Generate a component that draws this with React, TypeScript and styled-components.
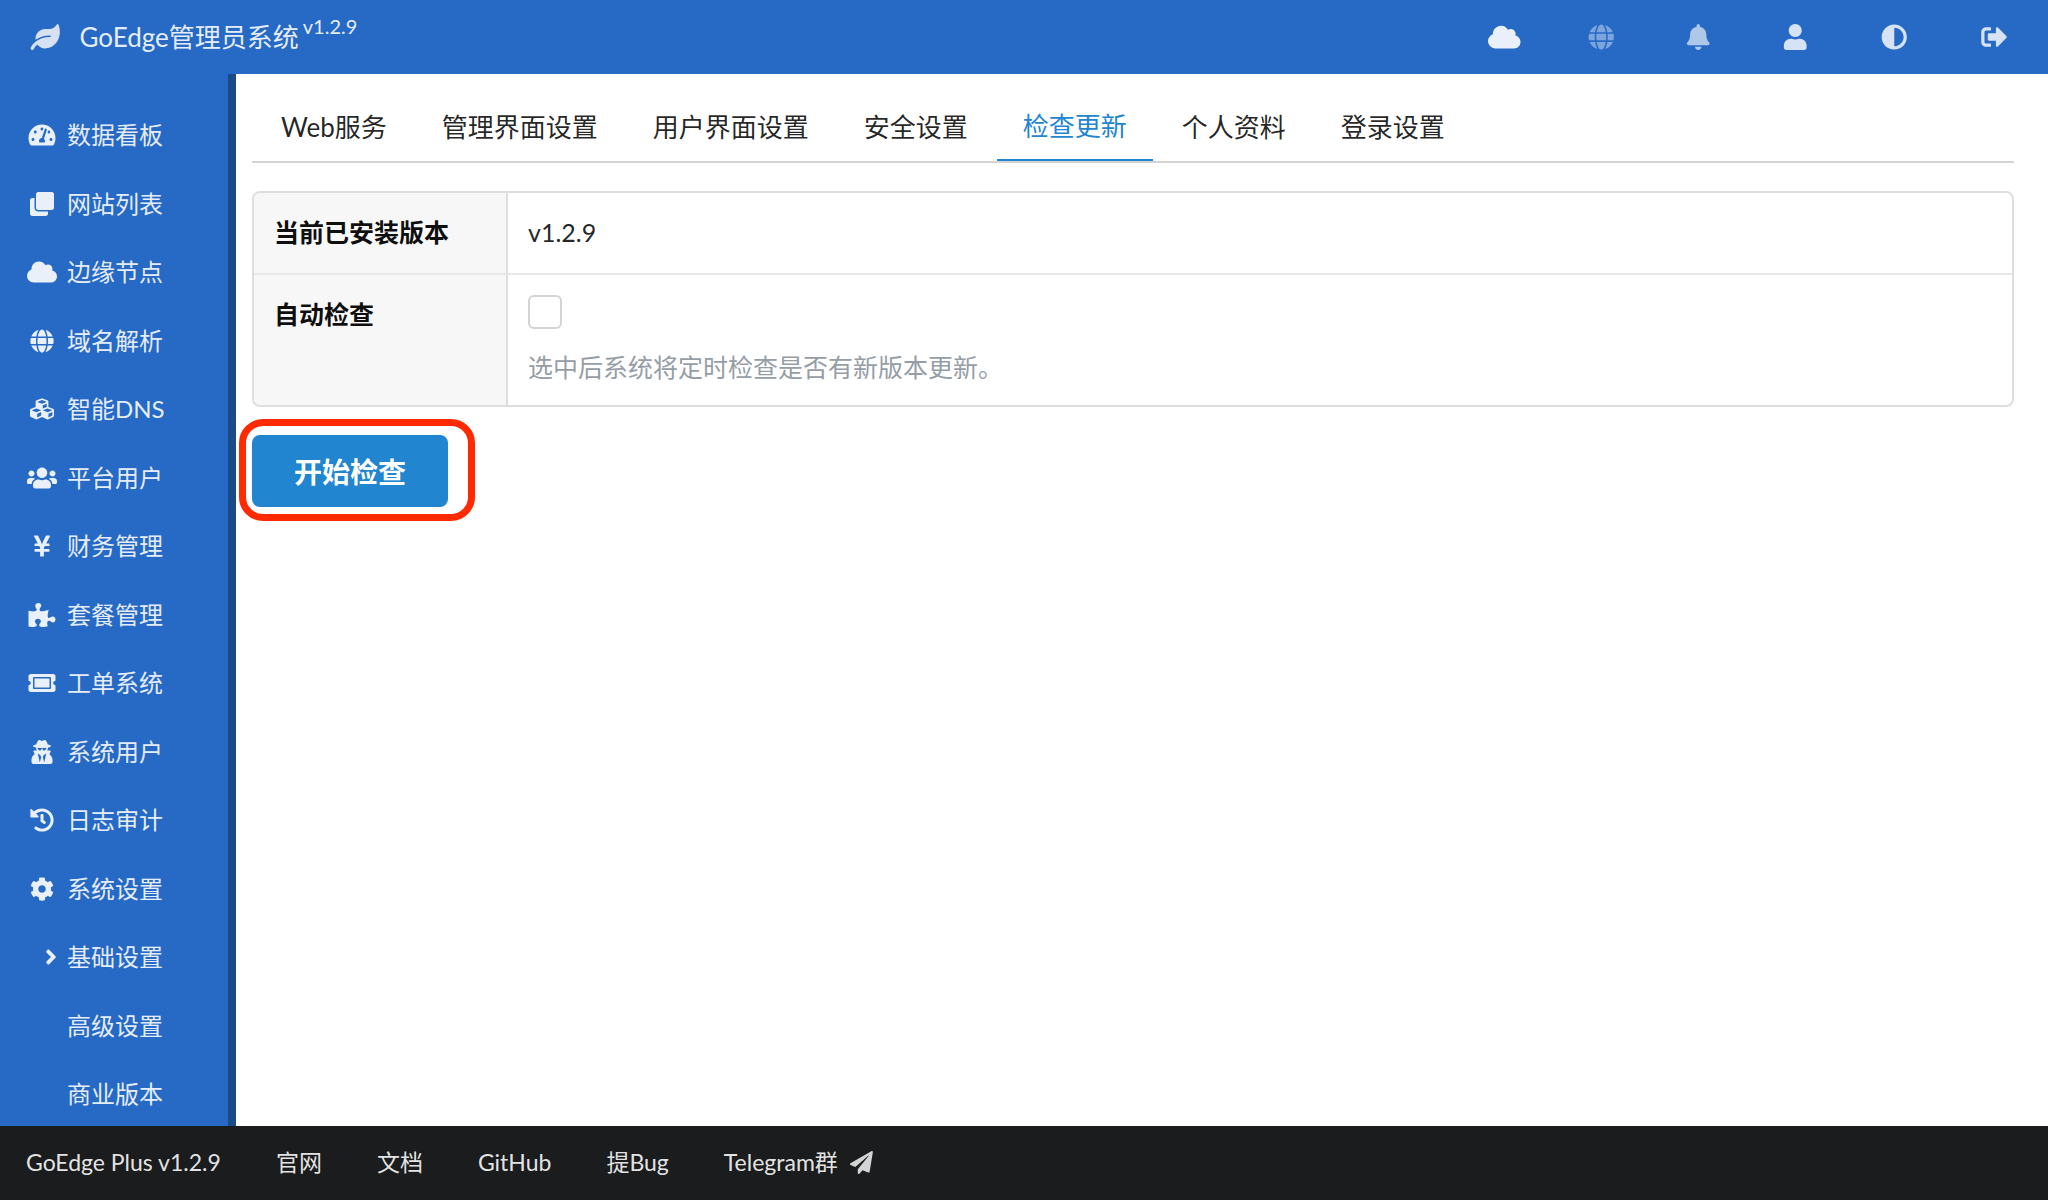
import React from "react";
import styled, { createGlobalStyle, css } from "styled-components";
import {
  FaLeaf, FaTachometerAlt, FaClone, FaCloud, FaGlobe, FaCubes, FaUsers, FaYenSign,
  FaPuzzlePiece, FaTicketAlt, FaUserSecret, FaHistory, FaCog, FaAngleRight, FaBell,
  FaUser, FaAdjust, FaSignOutAlt, FaPaperPlane,
} from "react-icons/fa";
import type { IconType } from "react-icons";

const colors = {
  blue: "#276ac6",
  blueDark: "#1b4a88",
  primary: "#2185d0",
  footer: "#1b1c1d",
  text: "rgba(0, 0, 0, 0.87)",
  heading: "rgba(0, 0, 0, 0.95)",
  comment: "#959da6",
  line: "#d4d4d5",
  tableLine: "#dededf",
  rowLine: "#e8e8e9",
  highlight: "#ff2a00",
};

const GlobalStyle = createGlobalStyle`
  *, *::before, *::after { box-sizing: border-box; }
  html, body, #root { height: 100%; margin: 0; }
  body {
    font-family: Lato, "Noto Sans CJK SC", sans-serif;
    font-size: 25px;
    line-height: 36px;
    color: ${colors.text};
    background: #fff;
  }
  a { color: inherit; text-decoration: none; }
  /* the widest glyphs are 1.25 times as wide as they are high */
  svg { flex: none; width: 1.25em; height: 1em; }
`;

const Page = styled.div`
  display: flex;
  flex-direction: column;
  height: 100vh;
`;

const TopBar = styled.header`
  flex: none;
  display: flex;
  align-items: center;
  justify-content: space-between;
  height: 74px;
  padding: 0 4px 0 29px;
  color: rgba(255, 255, 255, 0.9);
  background: ${colors.blue};
`;

const Brand = styled.a`
  display: flex;
  align-items: center;
  gap: 18px;
  font-size: 26px;

  svg { opacity: 0.9; }
`;

const Version = styled.sup`
  margin-left: 4px;
  font-size: 20px;
  line-height: 0;
  vertical-align: 13px;
`;

const Tools = styled.nav`
  display: flex;
`;

const Tool = styled.a<{ $opacity: number; $wide?: boolean }>`
  display: flex;
  justify-content: center;
  width: ${(p) => (p.$wide ? 100 : 97)}px;
  font-size: 26px;
  color: rgba(255, 255, 255, ${(p) => p.$opacity});
`;

const Body = styled.div`
  flex: 1;
  min-height: 0;
  display: flex;
`;

const Sidebar = styled.nav`
  flex: none;
  width: 236px;
  padding-top: 27px;
  overflow: hidden;
  color: rgba(255, 255, 255, 0.9);
  background: ${colors.blue};
  border-right: 8px solid ${colors.blueDark};
`;

const SideLink = styled.a`
  display: flex;
  align-items: center;
  gap: 10px;
  height: 68px;
  padding-left: 27px;
  font-size: 24px;

  &:nth-child(even) { height: 69px; }
`;

const SideIcon = styled.span<{ $sub?: boolean }>`
  flex: none;
  display: flex;
  justify-content: flex-end;
  width: 30px;
  ${(p) => p.$sub && css`
    svg { width: 12px; }
  `}
`;

const Main = styled.main`
  flex: 1;
  min-width: 0;
  padding: 16px 34px 0 16px;
`;

const Tabs = styled.nav`
  display: flex;
  gap: 3px;
  height: 73px;
  padding-left: 3px;
  border-bottom: 2px solid ${colors.line};
`;

const Tab = styled.a<{ $active?: boolean }>`
  display: flex;
  align-items: center;
  padding: 3px 26px 0;
  font-size: 26px;
  ${(p) => p.$active && css`
    color: ${colors.primary};
    border-bottom: 2px solid ${colors.primary};
  `}
`;

const Table = styled.table`
  width: 100%;
  margin-top: 28px;
  border: 2px solid ${colors.tableLine};
  border-radius: 8px;
  border-spacing: 0;
  overflow: hidden;
`;

const cell = css`
  padding: 21px 20px 23px;
  text-align: left;
  vertical-align: top;
  tr + tr > & { border-top: 2px solid ${colors.rowLine}; }
`;

const HeadCell = styled.th`
  ${cell}
  width: 254px;
  font-weight: 700;
  color: ${colors.heading};
  background: #f7f7f7;
  border-right: 2px solid ${colors.tableLine};
`;

const Cell = styled.td`
  ${cell}
`;

const CheckBox = styled.input`
  appearance: none;
  display: block;
  width: 34px;
  height: 34px;
  margin: -1px 0 23px;
  border: 2px solid ${colors.line};
  border-radius: 6px;
  background: #fff;

  &:checked { background: ${colors.primary}; }
`;

const Comment = styled.p`
  margin: 0;
  line-height: 30px;
  color: ${colors.comment};
`;

const Highlight = styled.div`
  width: fit-content;
  margin: 12px 0 0 -13px;
  padding: 9px 20px 7px 6px;
  border: 7px solid ${colors.highlight};
  border-radius: 24px;
`;

const PrimaryButton = styled.button`
  display: block;
  height: 72px;
  padding: 0 42px;
  border: 0;
  border-radius: 8px;
  font: 700 28px Lato, "Noto Sans CJK SC", sans-serif;
  color: #fff;
  background: ${colors.primary};
`;

const Footer = styled.footer`
  flex: none;
  display: flex;
  align-items: center;
  gap: 55px;
  height: 74px;
  padding: 0 26px 2px;
  font-size: 23px;
  color: rgba(255, 255, 255, 0.9);
  background: ${colors.footer};
`;

const FooterLink = styled.a`
  display: flex;
  align-items: center;
  gap: 9px;

  svg { opacity: 0.9; }
`;

const menu: { label: string; icon?: IconType; sub?: boolean }[] = [
  { label: "数据看板", icon: FaTachometerAlt },
  { label: "网站列表", icon: FaClone },
  { label: "边缘节点", icon: FaCloud },
  { label: "域名解析", icon: FaGlobe },
  { label: "智能DNS", icon: FaCubes },
  { label: "平台用户", icon: FaUsers },
  { label: "财务管理", icon: FaYenSign },
  { label: "套餐管理", icon: FaPuzzlePiece },
  { label: "工单系统", icon: FaTicketAlt },
  { label: "系统用户", icon: FaUserSecret },
  { label: "日志审计", icon: FaHistory },
  { label: "系统设置", icon: FaCog },
  { label: "基础设置", icon: FaAngleRight, sub: true },
  { label: "高级设置", sub: true },
  { label: "商业版本", sub: true },
];

const tools: { label: string; icon: IconType; opacity: number; wide?: boolean }[] = [
  { label: "集群", icon: FaCloud, opacity: 0.9 },
  { label: "域名", icon: FaGlobe, opacity: 0.4 },
  { label: "消息", icon: FaBell, opacity: 0.63 },
  { label: "账户", icon: FaUser, opacity: 0.81 },
  { label: "主题", icon: FaAdjust, opacity: 0.81, wide: true },
  { label: "退出", icon: FaSignOutAlt, opacity: 0.81, wide: true },
];

const tabs = ["Web服务", "管理界面设置", "用户界面设置", "安全设置", "检查更新", "个人资料", "登录设置"];

export default function App() {
  return (
    <>
      <GlobalStyle />
      <Page>
        <TopBar>
          <Brand href="#">
            <FaLeaf />
            <span>GoEdge管理员系统<Version>v1.2.9</Version></span>
          </Brand>
          <Tools>
            {tools.map(({ label, icon: Icon, opacity, wide }) => (
              <Tool key={label} href="#" aria-label={label} $opacity={opacity} $wide={wide}>
                <Icon />
              </Tool>
            ))}
          </Tools>
        </TopBar>
        <Body>
          <Sidebar>
            {menu.map(({ label, icon: Icon, sub }) => (
              <SideLink key={label} href="#">
                <SideIcon $sub={sub}>{Icon && <Icon />}</SideIcon>
                {label}
              </SideLink>
            ))}
          </Sidebar>
          <Main>
            <Tabs>
              {tabs.map((t) => (
                <Tab key={t} href="#" $active={t === "检查更新"}>{t}</Tab>
              ))}
            </Tabs>
            <Table>
              <tbody>
                <tr>
                  <HeadCell scope="row">当前已安装版本</HeadCell>
                  <Cell>v1.2.9</Cell>
                </tr>
                <tr>
                  <HeadCell scope="row"><label htmlFor="auto-check">自动检查</label></HeadCell>
                  <Cell>
                    <CheckBox type="checkbox" id="auto-check" />
                    <Comment>选中后系统将定时检查是否有新版本更新。</Comment>
                  </Cell>
                </tr>
              </tbody>
            </Table>
            <Highlight>
              <PrimaryButton type="button">开始检查</PrimaryButton>
            </Highlight>
          </Main>
        </Body>
        <Footer>
          <FooterLink href="#">GoEdge Plus v1.2.9</FooterLink>
          <FooterLink href="#">官网</FooterLink>
          <FooterLink href="#">文档</FooterLink>
          <FooterLink href="#">GitHub</FooterLink>
          <FooterLink href="#">提Bug</FooterLink>
          <FooterLink href="#">Telegram群 <FaPaperPlane /></FooterLink>
        </Footer>
      </Page>
    </>
  );
}
